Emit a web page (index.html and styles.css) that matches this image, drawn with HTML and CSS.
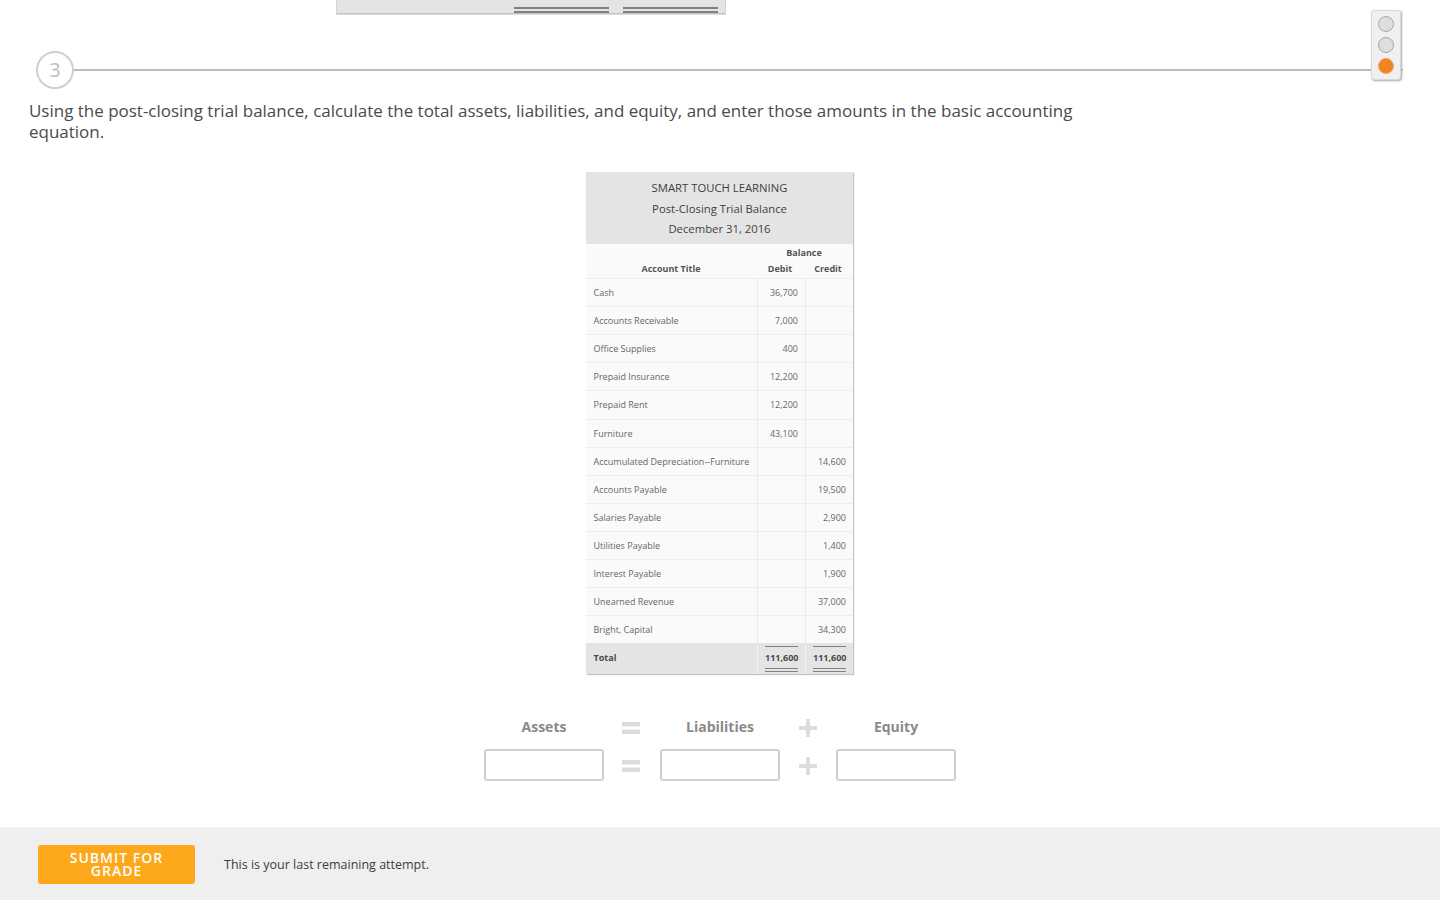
FILE: index.html
```html
<!DOCTYPE html>
<html lang="en">
<head>
<meta charset="utf-8">
<title>Post-Closing Trial Balance</title>
<link rel="stylesheet" href="styles.css">
</head>
<body>
<main class="page">
  <div class="prev-total">
    <div class="prev-cell"><span class="double"></span></div>
    <div class="prev-cell"><span class="double"></span></div>
  </div>

  <section class="step">
    <div class="step-head">
      <div class="step-num">3</div>
      <div class="step-line"></div>
    </div>
    <p class="prompt">Using the post-closing trial balance, calculate the total assets, liabilities, and equity, and enter those amounts in the basic accounting equation.</p>

    <div class="sheet">
      <div class="sheet-title">
        <div>SMART TOUCH LEARNING</div>
        <div>Post-Closing Trial Balance</div>
        <div>December 31, 2016</div>
      </div>
      <div class="col-head">
        <div class="ch-balance">Balance</div>
        <div class="ch-title">Account Title</div>
        <div class="ch-num">Debit</div>
        <div class="ch-num">Credit</div>
      </div>
      <div class="row"><div class="name">Cash</div><div class="num">36,700</div><div class="num"></div></div>
      <div class="row"><div class="name">Accounts Receivable</div><div class="num">7,000</div><div class="num"></div></div>
      <div class="row"><div class="name">Office Supplies</div><div class="num">400</div><div class="num"></div></div>
      <div class="row"><div class="name">Prepaid Insurance</div><div class="num">12,200</div><div class="num"></div></div>
      <div class="row"><div class="name">Prepaid Rent</div><div class="num">12,200</div><div class="num"></div></div>
      <div class="row"><div class="name">Furniture</div><div class="num">43,100</div><div class="num"></div></div>
      <div class="row"><div class="name">Accumulated Depreciation--Furniture</div><div class="num"></div><div class="num">14,600</div></div>
      <div class="row"><div class="name">Accounts Payable</div><div class="num"></div><div class="num">19,500</div></div>
      <div class="row"><div class="name">Salaries Payable</div><div class="num"></div><div class="num">2,900</div></div>
      <div class="row"><div class="name">Utilities Payable</div><div class="num"></div><div class="num">1,400</div></div>
      <div class="row"><div class="name">Interest Payable</div><div class="num"></div><div class="num">1,900</div></div>
      <div class="row"><div class="name">Unearned Revenue</div><div class="num"></div><div class="num">37,000</div></div>
      <div class="row"><div class="name">Bright, Capital</div><div class="num"></div><div class="num">34,300</div></div>
      <div class="row total">
        <div class="name">Total</div>
        <div class="num"><span class="sum">111,600</span></div>
        <div class="num"><span class="sum">111,600</span></div>
      </div>
    </div>

    <div class="equation">
      <div class="eq-label">Assets</div>
      <svg class="op op-eq" viewBox="0 0 18 18" aria-label="equals"><path d="M0 3h18v4.500H0zM0 10.500h18v4.500H0z"/></svg>
      <div class="eq-label">Liabilities</div>
      <svg class="op" viewBox="0 0 18 18" aria-label="plus"><path d="M7 0h4v7h7v4h-7v7H7v-7H0V7h7z"/></svg>
      <div class="eq-label">Equity</div>
      <input class="eq-input" type="text" aria-label="Assets">
      <svg class="op op-eq" viewBox="0 0 18 18" aria-label="equals"><path d="M0 3h18v4.500H0zM0 10.500h18v4.500H0z"/></svg>
      <input class="eq-input" type="text" aria-label="Liabilities">
      <svg class="op" viewBox="0 0 18 18" aria-label="plus"><path d="M7 0h4v7h7v4h-7v7H7v-7H0V7h7z"/></svg>
      <input class="eq-input" type="text" aria-label="Equity">
    </div>
  </section>

  <footer class="footer">
    <button class="submit" type="button">SUBMIT FOR GRADE</button>
    <span class="attempt">This is your last remaining attempt.</span>
  </footer>

  <div class="stoplight">
    <span class="lamp"></span>
    <span class="lamp"></span>
    <span class="lamp on"></span>
  </div>
</main>
</body>
</html>
```
FILE: styles.css
```css
* { box-sizing: border-box; }
html, body { margin: 0; padding: 0; background: #fff; }
body {
  font-family: "Open Sans", "Liberation Sans", sans-serif;
  color: #444;
}
.page {
  position: relative;
  width: 1440px;
  height: 900px;
  overflow: hidden;
  display: flex;
  flex-direction: column;
}

/* bottom edge of the previous step's table */
.prev-total {
  flex: none;
  width: 390px;
  height: 14px;
  margin-left: 336px;
  padding-left: 170px;
  display: flex;
  gap: 14px;
  background: #e4e4e4;
  border-bottom: 1px solid #c4c4c4;
  border-left: 1px solid #d4d4d4;
  border-right: 1px solid #d4d4d4;
  box-shadow: 0 1px 0 #ddd;
}
.prev-cell { width: 102px; padding: 7px 0 0 7px; }
.prev-cell + .prev-cell { padding-left: 0; width: 95px; }
.double {
  display: block;
  height: 6px;
  border-top: 2px solid #808080;
  border-bottom: 2px solid #808080;
}

/* step */
.step { flex: 1; min-height: 0; display: flex; flex-direction: column; }
.step-head {
  display: flex;
  align-items: center;
  margin: 37px 37px 0 36px;
}
.step-num {
  flex: none;
  width: 38px;
  height: 38px;
  padding-bottom: 2px;
  border: 2px solid #cfcfcf;
  border-radius: 50%;
  display: flex;
  align-items: center;
  justify-content: center;
  font-size: 20px;
  color: #bdbdbd;
}
.step-line { flex: 1; height: 2px; background: #bcbcbc; }
.prompt {
  margin: 11px 0 0 29px;
  width: 1060px;
  font-size: 16.980px;
  line-height: 21px;
  color: #4a4a4a;
}

/* trial balance */
.sheet {
  align-self: center;
  width: 267px;
  margin-left: -1px;
  margin-top: 30px;
  background: #fafafa;
  box-shadow: 1px 1px 1px #c4c4c4;
  font-size: 9px;
}
.sheet-title {
  height: 72px;
  padding-top: 6px;
  background: #e4e4e4;
  text-align: center;
  font-size: 11.300px;
  line-height: 20.500px;
  color: #3f3f3f;
}
.col-head {
  display: grid;
  grid-template-columns: 170px 48px 48px;
  grid-template-rows: 17px 17px;
  height: 34px;
  font-weight: 700;
  line-height: 16px;
  color: #555;
  text-align: center;
}
.ch-balance { grid-column: 2 / 4; grid-row: 1; padding-top: 1px; }
.ch-title { grid-column: 1; grid-row: 2; }
.ch-num { grid-row: 2; }
.row {
  display: grid;
  grid-template-columns: 171px 48px 48px;
  height: 28.120px;
  line-height: 27px;
  border-top: 1px solid #eee;
  color: #666;
}
.name { padding-left: 7.500px; white-space: nowrap; }
.num {
  padding-right: 7px;
  text-align: right;
  border-left: 1px solid #e9e9e9;
}
.row.total {
  height: 31px;
  background: #e4e4e4;
  border-top: 0;
  line-height: 29px;
  font-weight: 700;
  color: #4a4a4a;
}
.total .num {
  display: flex;
  justify-content: flex-end;
  align-items: flex-start;
  border-left: 1px solid #f4f4f4;
}
.sum {
  display: block;
  width: 33px;
  height: 26px;
  margin-top: 3px;
  line-height: 22px;
  text-align: center;
  border-top: 1px solid #808080;
  border-bottom: 4px double #808080;
}

/* equation */
.equation {
  align-self: center;
  margin-top: 42px;
  display: grid;
  grid-template-columns: 120px 56px 120px 56px 120px;
  grid-template-rows: 22px 32px;
  row-gap: 11px;
  justify-items: center;
  align-items: center;
}
.eq-label {
  font-size: 14px;
  font-weight: 700;
  color: #8a8a8a;
  line-height: 22px;
}
.op { width: 18px; height: 18px; margin-top: 2px; fill: #dcdcdc; }
.op-eq { margin-right: 2px; }
.eq-input {
  width: 120px;
  height: 32px;
  margin: 0;
  border: 2px solid #cfcfcf;
  border-radius: 3px;
  background: #fff;
}

/* footer */
.footer {
  position: absolute;
  left: 0;
  right: 0;
  bottom: 0;
  height: 73px;
  padding-left: 38px;
  display: flex;
  align-items: center;
  gap: 29px;
  background: #efefef;
}
.submit {
  width: 157px;
  height: 39px;
  margin-top: 2px;
  padding: 0 20px 2px;
  border: 0;
  border-radius: 3px;
  background: #fda71b;
  color: #fff;
  font-family: inherit;
  font-size: 14px;
  font-weight: 600;
  letter-spacing: 1px;
  line-height: 13px;
}
.attempt { font-size: 12.500px; font-weight: 500; color: #3d3d3d; margin-top: 2px; }

/* traffic light overlay */
.stoplight {
  position: absolute;
  top: 10px;
  left: 1371px;
  width: 30px;
  height: 70px;
  padding: 5px 0 0 6px;
  display: flex;
  flex-direction: column;
  gap: 5px;
  background: #f0f0f0;
  border: 1px solid #d8d8d8;
  border-radius: 3px;
  box-shadow: 1px 1px 2px #aaa;
}
.lamp {
  flex: none;
  width: 16px;
  height: 16px;
  border-radius: 50%;
  background: #dedede;
  border: 1px solid #a8a8a8;
}
.lamp.on { background: #f08520; border-color: #f5a45c; }
```
